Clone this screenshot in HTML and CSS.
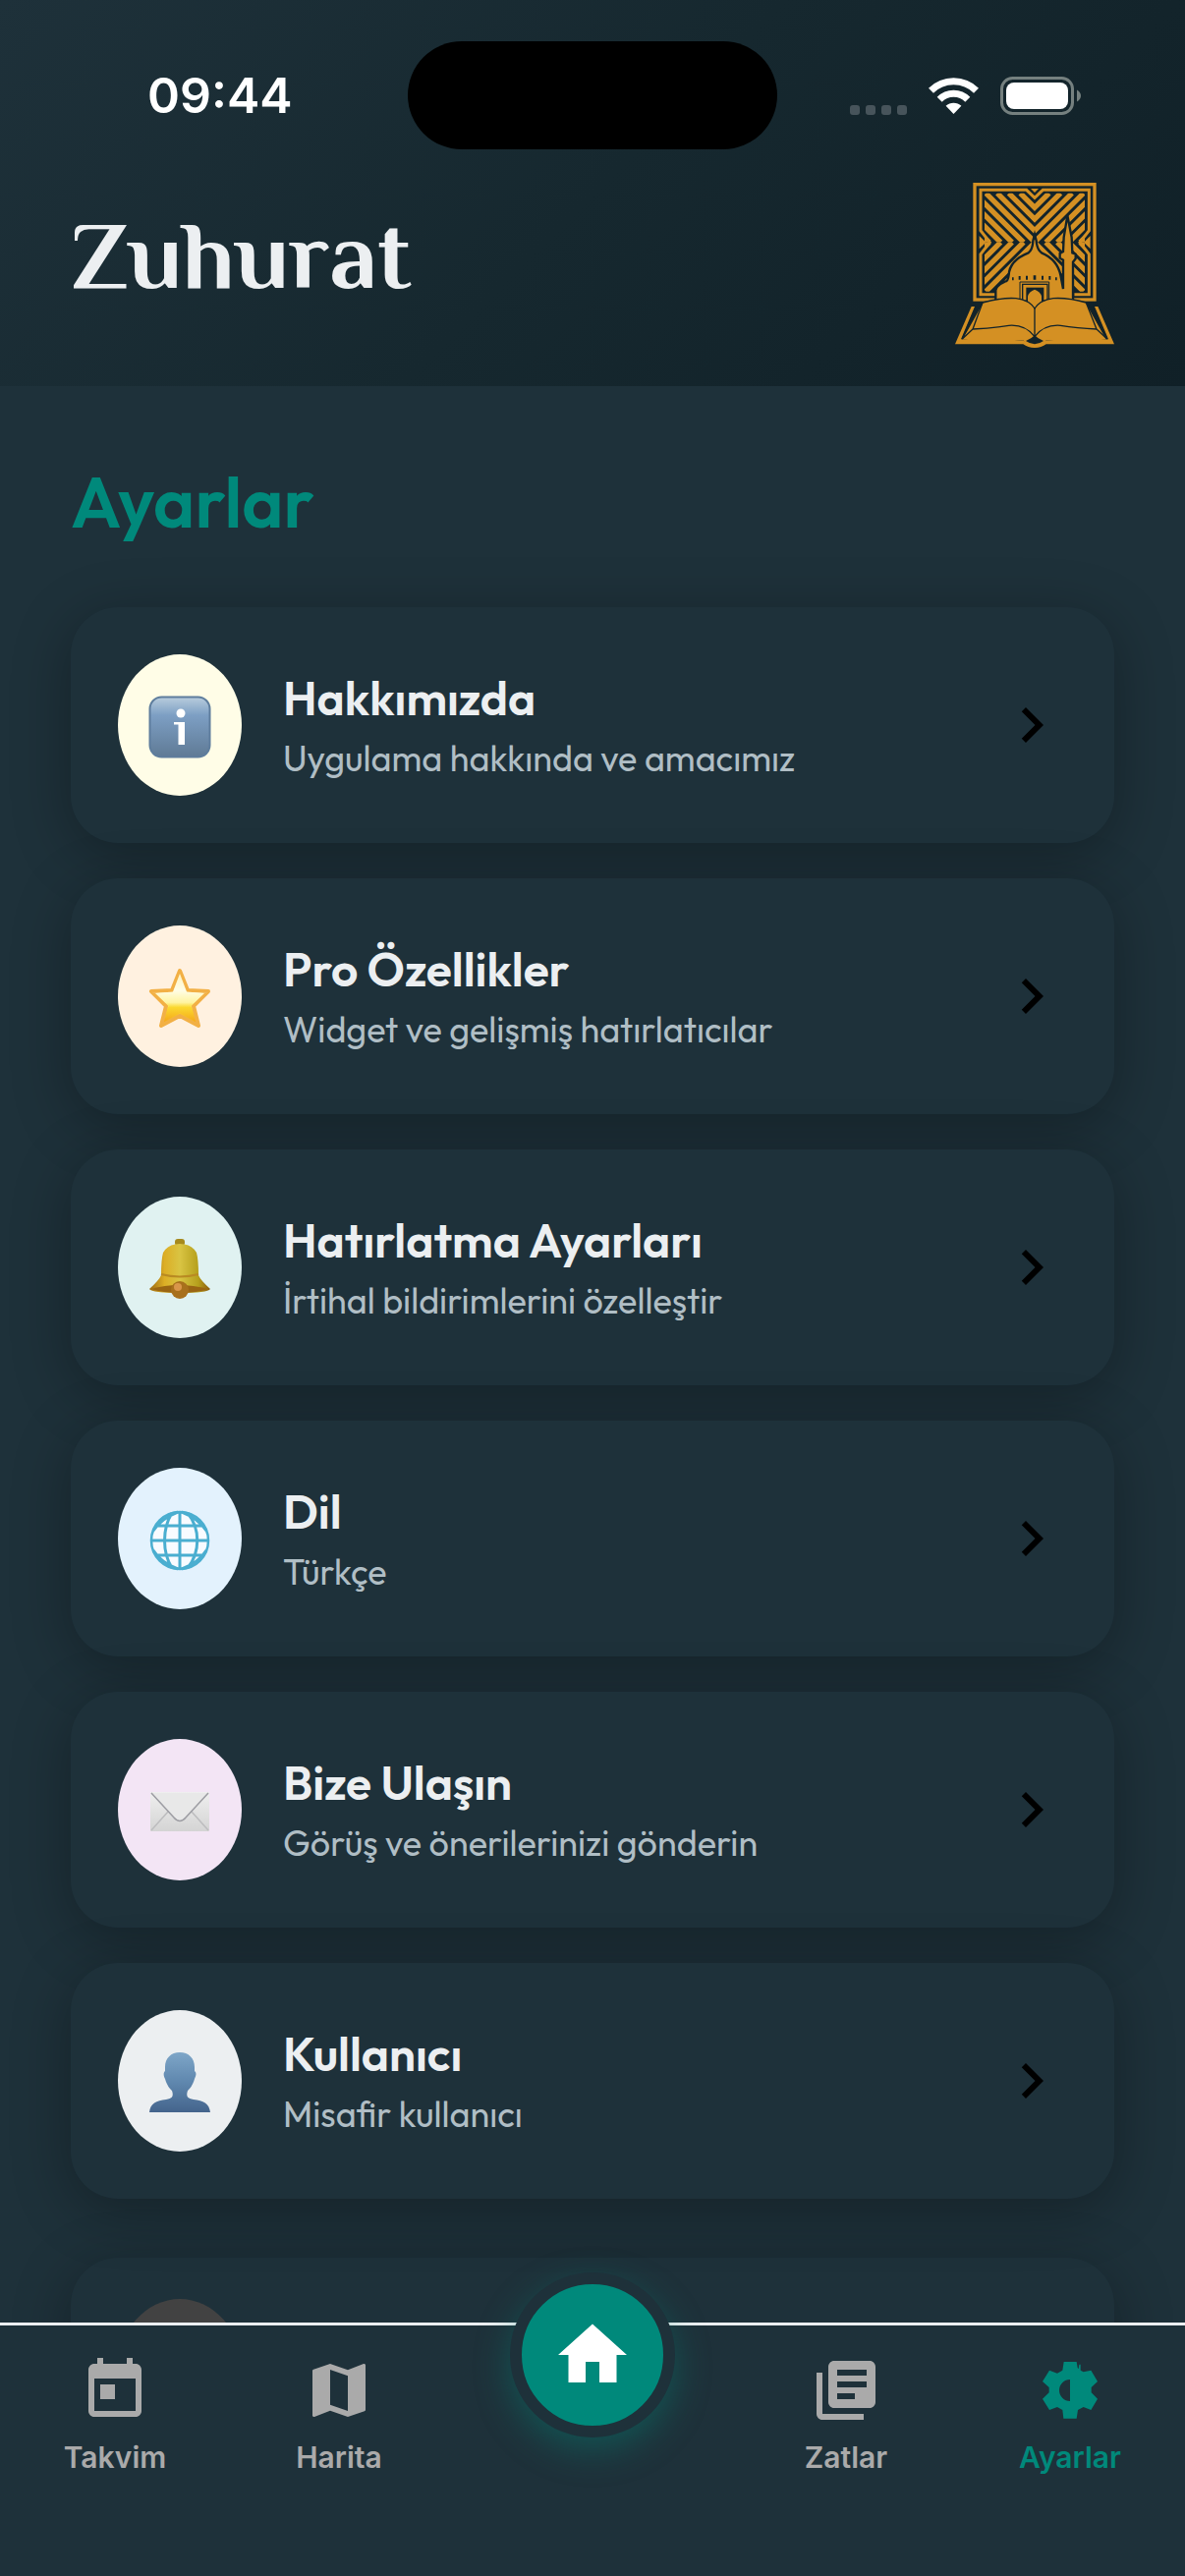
FILE: index.html
```html
<!DOCTYPE html>
<html lang="tr">
<head>
<meta charset="utf-8">
<meta name="viewport" content="width=device-width, initial-scale=1">
<title>Zuhurat</title>
<link rel="stylesheet" href="styles.css">
</head>
<body>
<div class="app">
  <header class="header">
    <div class="status">
      <span class="time">09:44</span>
      <span class="island"></span>
      <div class="indicators">
        <svg class="dots" viewBox="0 0 58 10"><rect width="10" height="10" rx="3"/><rect x="16" width="10" height="10" rx="3"/><rect x="32" width="10" height="10" rx="3"/><rect x="48" width="10" height="10" rx="3"/></svg>
        <svg class="wifi" viewBox="0 0 51 37"><path class="arc" d="M2.5 13.2A32.5 32.5 0 0 1 48.500 13.2M11.200 22.2A20 20 0 0 1 39.800 22.2"/><path d="M25.500 37L17.600 28.800A11.500 11.500 0 0 1 33.400 28.800Z"/></svg>
        <svg class="battery" viewBox="0 0 82 39"><rect class="shell" x="1.500" y="1.500" width="72" height="36" rx="11"/><rect x="6" y="6" width="63" height="27" rx="8"/><path class="cap" d="M78 13.500Q82 16 82 19.500Q82 23 78 25.500Z"/></svg>
      </div>
    </div>
    <div class="brand">
      <h1 class="brand-name">Zuhurat</h1>
      <svg class="logo" viewBox="66 48 486 504" role="img" aria-label="Zuhurat">
        <defs>
          <clipPath id="quarter"><rect x="156" y="80" width="153" height="150"/></clipPath>
          <g id="hatch" clip-path="url(#quarter)"><path d="M-15 80l150 150M20 80l150 150M55 80l150 150M90 80l150 150M125 80l150 150M160 80l150 150M195 80l150 150M230 80l150 150M265 80l150 150" fill="none" stroke="#d49023" stroke-width="16"/></g>
        </defs>
        <rect x="126" y="53" width="366" height="352" fill="none" stroke="#d49023" stroke-width="10"/>
        <path d="M190 389H144V266L172 230 144 194V70H284L309 94 334 70H475V194L447 230 475 266V389H430" fill="none" stroke="#d49023" stroke-width="9"/>
        <use href="#hatch"/>
        <use href="#hatch" transform="matrix(-1 0 0 1 618 0)"/>
        <use href="#hatch" transform="matrix(1 0 0 -1 0 460)"/>
        <use href="#hatch" transform="matrix(-1 0 0 -1 618 460)"/>
        <path d="M297 66H321L309 78ZM140 210L160 230 140 250ZM479 210L459 230 479 250Z" fill="#d49023"/>
        <path d="M190 410V376Q194 360 218 350 228 350 230 330 232 285 290 262 303 252 304 225L309 206 314 225Q316 252 330 262 378 282 388 330L396 372V284L386 278V264L396 258 398 215 409 148 422 215 424 262 434 266V280L426 290V410Z" fill="#d49023" stroke="#12232a" stroke-width="7"/>
        <path d="M240 337h5v9h-5zM260 333h6v11h-6zM282 332h6v12h-6zM305 331h8v13h-8zM330 332h6v12h-6zM352 333h6v11h-6zM372 337h5v9h-5z" fill="#12232a"/>
        <path d="M264 408V351H353V408" fill="none" stroke="#12232a" stroke-width="3"/>
        <path d="M272 408V358H348V408" fill="none" stroke="#12232a" stroke-width="4"/>
        <path d="M283 410V368H337V410Z" fill="#12232a"/>
        <path d="M288 415V394Q292 380 309 374 326 380 330 394V415L309 432Z" fill="#d49023"/>
        <path d="M150 414Q208 398 252 401 292 406 309 432 326 406 366 401 410 398 466 414L530 528Q420 545 345 530 332 550 309 550 286 550 273 530 190 543 86 528Z" fill="#d49023" stroke="#12232a" stroke-width="4"/>
        <path d="M116 426H126L84 526 148 529Q220 533 274 529 309 556 343 529 400 533 534 526L492 426H502L552 541H344Q330 552 309 552 288 552 274 541H66Z" fill="#d49023"/>
        <path d="M282 531Q300 524 309 514 318 524 336 531 322 541 309 541 296 541 282 531Z" fill="#12232a"/>
        <path d="M309 432V516M150 414L120 495Q180 492 230 484 280 480 309 518 338 480 388 484 438 492 498 495L466 414M131 424L88 525 120 495M486 424L530 525 498 495" fill="none" stroke="#12232a" stroke-width="4"/>
      </svg>
    </div>
  </header>

  <main class="content">
    <h2 class="page-title">Ayarlar</h2>
    <div class="cards">
      <button class="card" type="button">
        <span class="badge badge-info"><svg class="emoji" viewBox="0 0 64 64">
          <defs><linearGradient id="gInfo" x1="0" y1="0" x2="0" y2="1"><stop offset="0" stop-color="#b9cddd"/><stop offset=".3" stop-color="#7d9fc4"/><stop offset="1" stop-color="#5f7a95"/></linearGradient></defs>
          <rect x="1.500" y="1.500" width="61" height="61" rx="12" fill="url(#gInfo)" stroke="#5e7d9d" stroke-width="2"/>
          <circle cx="33" cy="18" r="4.500" fill="#fff"/><path d="M26 27H37V50H30.500V29.500H26Z" fill="#fff"/></svg></span>
        <span class="card-text"><span class="card-title">Hakkımızda</span><span class="card-sub">Uygulama hakkında ve amacımız</span></span>
        <svg class="chevron" viewBox="0 0 24 24"><path d="M10 6L8.590 7.410 13.170 12l-4.580 4.590L10 18l6-6z"/></svg>
      </button>
      <button class="card" type="button">
        <span class="badge badge-star"><svg class="emoji" viewBox="0 0 64 64">
          <defs><linearGradient id="gStar" x1="0" y1="0" x2="0" y2="1"><stop offset="0" stop-color="#fff3c0"/><stop offset=".35" stop-color="#fffde6"/><stop offset=".6" stop-color="#fff4a0"/><stop offset=".7" stop-color="#fbd92f"/><stop offset="1" stop-color="#f5a81a"/></linearGradient></defs>
          <path d="M32 4L40 24 61 25 46 40 51 60 32 50 13 60 18 40 3 25 24 24Z" fill="url(#gStar)" stroke="#f2b045" stroke-width="4" stroke-linejoin="round"/><path d="M32 7L39 25.500 57 27 43.500 40 48 56 32 47 16 56 20.500 40 7 27 25 25.500Z" fill="url(#gStar)"/></svg></span>
        <span class="card-text"><span class="card-title">Pro Özellikler</span><span class="card-sub">Widget ve gelişmiş hatırlatıcılar</span></span>
        <svg class="chevron" viewBox="0 0 24 24"><path d="M10 6L8.590 7.410 13.170 12l-4.580 4.590L10 18l6-6z"/></svg>
      </button>
      <button class="card" type="button">
        <span class="badge badge-bell"><svg class="emoji" viewBox="0 0 64 64">
          <defs><linearGradient id="gBell" x1="0" y1="0" x2="1" y2="0"><stop offset="0" stop-color="#9c6a12"/><stop offset=".25" stop-color="#dcae25"/><stop offset=".5" stop-color="#d9c443"/><stop offset=".8" stop-color="#b6a01c"/><stop offset="1" stop-color="#8a5a10"/></linearGradient></defs>
          <rect x="27" y="1" width="10" height="7" rx="3" fill="#a68a1e"/>
          <path d="M13 38Q13 22 15 15 20 6 32 6 44 6 49 15 51 22 51 38 53 43 63 52 60 56 32 56 4 56 1 52 11 43 13 38Z" fill="url(#gBell)"/>
          <path d="M3 52Q30 44 61 52 50 56 32 56 14 56 3 52Z" fill="#9a6513"/><path d="M13 37Q32 42 51 37" fill="none" stroke="#b98a22" stroke-width="2"/>
          <circle cx="32" cy="53" r="9" fill="#a8701c"/><circle cx="30" cy="50" r="4" fill="#d9964a"/></svg></span>
        <span class="card-text"><span class="card-title">Hatırlatma Ayarları</span><span class="card-sub">İrtihal bildirimlerini özelleştir</span></span>
        <svg class="chevron" viewBox="0 0 24 24"><path d="M10 6L8.590 7.410 13.170 12l-4.580 4.590L10 18l6-6z"/></svg>
      </button>
      <button class="card" type="button">
        <span class="badge badge-globe"><svg class="emoji" viewBox="0 0 64 64">
          <circle cx="32" cy="32" r="29" fill="#f8fbff" stroke="#4aaed0" stroke-width="2.500"/>
          <path d="M32 3V61M2 32H62M7 17H57M7 47H57M24 4C14 20 14 44 24 60M40 4C53 20 53 44 40 60M30 3Q12 10 5 22M34 3Q52 10 59 22M30 61Q12 54 5 42M34 61Q52 54 59 42" fill="none" stroke="#4aaed0" stroke-width="3"/></svg></span>
        <span class="card-text"><span class="card-title">Dil</span><span class="card-sub">Türkçe</span></span>
        <svg class="chevron" viewBox="0 0 24 24"><path d="M10 6L8.590 7.410 13.170 12l-4.580 4.590L10 18l6-6z"/></svg>
      </button>
      <button class="card" type="button">
        <span class="badge badge-mail"><svg class="emoji" viewBox="0 0 64 64">
          <defs><linearGradient id="gMail" x1="0" y1="0" x2="0" y2="1"><stop offset="0" stop-color="#efefef"/><stop offset="1" stop-color="#d4d4d4"/></linearGradient></defs>
          <rect x="2" y="12" width="60" height="40" rx="1" fill="url(#gMail)"/>
          <path d="M3 51L20 32M61 51L44 32" stroke="#bdbdbf" stroke-width="1.500"/>
          <path d="M3 13L26 38Q32 45 38 38L61 13" fill="#e8e8e8" stroke="#9d9da3" stroke-width="1.500"/></svg></span>
        <span class="card-text"><span class="card-title">Bize Ulaşın</span><span class="card-sub">Görüş ve önerilerinizi gönderin</span></span>
        <svg class="chevron" viewBox="0 0 24 24"><path d="M10 6L8.590 7.410 13.170 12l-4.580 4.590L10 18l6-6z"/></svg>
      </button>
      <button class="card" type="button">
        <span class="badge badge-user"><svg class="emoji" viewBox="0 0 64 64">
          <defs><linearGradient id="gUser" x1="0" y1="0" x2="0" y2="1"><stop offset="0" stop-color="#7ea6c8"/><stop offset=".5" stop-color="#5f87ae"/><stop offset="1" stop-color="#44648c"/></linearGradient></defs>
          <path d="M32 1C41 1 47 7 47 16V20Q50 22 47 28C45 35 42 38 40 40 38 46 40 48 46 49 56 50 62 53 63 62H1C2 53 8 50 18 49 24 48 26 46 24 40 22 38 19 35 17 28 14 22 17 20 17 20V16C17 7 23 1 32 1Z" fill="url(#gUser)"/></svg></span>
        <span class="card-text"><span class="card-title">Kullanıcı</span><span class="card-sub">Misafir kullanıcı</span></span>
        <svg class="chevron" viewBox="0 0 24 24"><path d="M10 6L8.590 7.410 13.170 12l-4.580 4.590L10 18l6-6z"/></svg>
      </button>
    </div>
    <div class="card card-muted"><span class="badge badge-muted"></span></div>
  </main>

  <nav class="tabs">
    <a class="tab" href="#takvim"><svg class="tab-icon" viewBox="0 0 24 24"><path d="M19 3h-1V1h-2v2H8V1H6v2H5c-1.110 0-2 .9-2 2v14c0 1.100.9 2 2 2h14c1.100 0 2-.9 2-2V5c0-1.100-.9-2-2-2zm0 16H5V8h14v11zM7 10h5v5H7z"/></svg>Takvim</a>
    <a class="tab" href="#harita"><svg class="tab-icon" viewBox="0 0 24 24"><path d="M20.500 3l-.16.03L15 5.100 9 3 3.360 4.900c-.21.07-.36.25-.36.48V20.500c0 .28.22.5.5.5l.16-.03L9 18.900l6 2.100 5.640-1.900c.21-.07.36-.25.36-.48V3.500c0-.28-.22-.5-.5-.5zM15 19l-6-2.110V5l6 2.110V19z"/></svg>Harita</a>
    <a class="home" href="#home" aria-label="Zuhurat"><svg class="home-icon" viewBox="0 0 24 24"><path d="M10 20v-6h4v6h5v-8h3L12 3 2 12h3v8z"/></svg></a>
    <a class="tab" href="#zatlar"><svg class="tab-icon" viewBox="0 0 24 24"><path d="M4 6H2v14c0 1.100.9 2 2 2h14v-2H4V6zm16-4H8c-1.100 0-2 .9-2 2v12c0 1.100.9 2 2 2h12c1.100 0 2-.9 2-2V4c0-1.100-.9-2-2-2zm-1 9H9V9h10v2zm-4 4H9v-2h6v2zm4-8H9V5h10v2z"/></svg>Zatlar</a>
    <a class="tab tab-active" href="#ayarlar"><svg class="tab-icon" viewBox="159 51 216 216"><path fill-rule="evenodd" d="M248 72H287L290 90 293 94 295 80H299V98L308 103 331 98 351 132 332 150V166L351 185 331 219 308 210 291 219 287 245H247L244 219 228 210 204 219 183 185 203 166V150L183 132 204 98 228 107 244 98ZM267 126A33 33 0 0 0 267 192Z"/></svg>Ayarlar</a>
  </nav>
</div>
</body>
</html>
```
FILE: styles.css
```css
* { box-sizing: border-box; }

body {
  margin: 0;
  background: #1e313a;
  color: #eceff1;
  font-family: Outfit, Lato, sans-serif;
}

h1, h2 { margin: 0; }

svg { display: block; flex: none; }

.app {
  display: flex;
  flex-direction: column;
  height: 100vh;
}

/* Header */
.header {
  flex: none;
  padding: 42px 72px 39px;
  background: linear-gradient(135deg, #1e313a 0%, #16282f 50%, #102027 100%);
}

.status {
  display: grid;
  grid-template-columns: 1fr 376px 1fr;
  align-items: center;
  height: 110px;
}

.time {
  padding-left: 78px;
  font: 600 50px/60px Inter, sans-serif;
  color: #fff;
}

.island {
  height: 110px;
  border-radius: 55px;
  background: #000;
}

.indicators {
  display: flex;
  justify-content: flex-end;
  align-items: center;
  gap: 22px;
  padding-right: 34px;
  fill: #fff;
}

.dots { width: 58px; height: 10px; align-self: flex-end; fill: #47545b; }
.wifi { width: 51px; height: 37px; }
.arc { fill: none; stroke: #fff; stroke-width: 7px; }
.battery { width: 82px; height: 39px; }
.shell { fill: none; stroke: #75807f; stroke-width: 3px; }
.cap { fill: #75807f; }

.brand {
  display: flex;
  justify-content: space-between;
  align-items: center;
  padding-top: 34px;
}

.brand-name {
  font: 700 98px/120px "El Messiri", "Liberation Serif", serif;
}

.logo { width: 162px; height: 168px; }

/* Settings list */
.content {
  flex: 1;
  min-height: 0;
  overflow: hidden;
  padding: 70px 72px 0;
}

.page-title {
  margin-bottom: 59px;
  font-size: 72px;
  font-weight: 600;
  line-height: 96px;
  color: #00897b;
}

.cards {
  display: flex;
  flex-direction: column;
  gap: 36px;
  margin-bottom: 60px;
}

.card {
  display: flex;
  align-items: center;
  width: 100%;
  padding: 48px;
  border: 0;
  border-radius: 48px;
  background: #1e313a;
  box-shadow: 0 12px 60px rgba(0, 0, 0, 0.3);
  color: inherit;
  font: inherit;
  text-align: left;
}

.card-muted { padding: 42px 48px; }

.badge {
  flex: none;
  display: flex;
  justify-content: center;
  align-items: center;
  width: 126px;
  height: 144px;
  padding-top: 3px;
  border-radius: 50%;
}

.badge-info { background: #fffde7; }
.badge-star { background: #fff1e0; }
.badge-bell { background: #e0f2f1; }
.badge-globe { background: #e3f2fd; }
.badge-mail { background: #f3e5f5; }
.badge-user { background: #eceff1; }
.badge-muted { background: #424242; }

.emoji { width: 64px; height: 64px; }

.card-text {
  flex: 1;
  display: flex;
  flex-direction: column;
  gap: 8px;
  margin-left: 42px;
}

.card-title {
  font-size: 48px;
  font-weight: 600;
  line-height: 60px;
}

.card-sub {
  font-size: 36px;
  line-height: 48px;
  color: #b0bec5;
}

.chevron { width: 72px; height: 72px; fill: #000; }

/* Bottom tabs */
.tabs {
  position: relative;
  flex: none;
  display: grid;
  grid-template-columns: 19fr 19fr 24fr 19fr 19fr;
  height: 258px;
  padding: 30px 3px 0;
  border-top: 3px solid #eceff1;
  background: #1e313a;
}

.tab {
  display: flex;
  flex-direction: column;
  align-items: center;
  gap: 14px;
  font: 600 30px/36px Inter, sans-serif;
  color: #aaa;
  text-decoration: none;
}

.tab-active { color: #00897b; }

.tab-icon { width: 72px; height: 72px; fill: currentColor; }

.home {
  display: flex;
  justify-content: center;
  align-items: center;
  justify-self: center;
  width: 168px;
  height: 168px;
  margin-top: -84px;
  border: 12px solid #1e313a;
  border-radius: 50%;
  background: #00897b;
  box-shadow: 0 12px 36px rgba(0, 137, 123, 0.4);
}

.home-icon { width: 84px; height: 84px; fill: #fff; }
```
